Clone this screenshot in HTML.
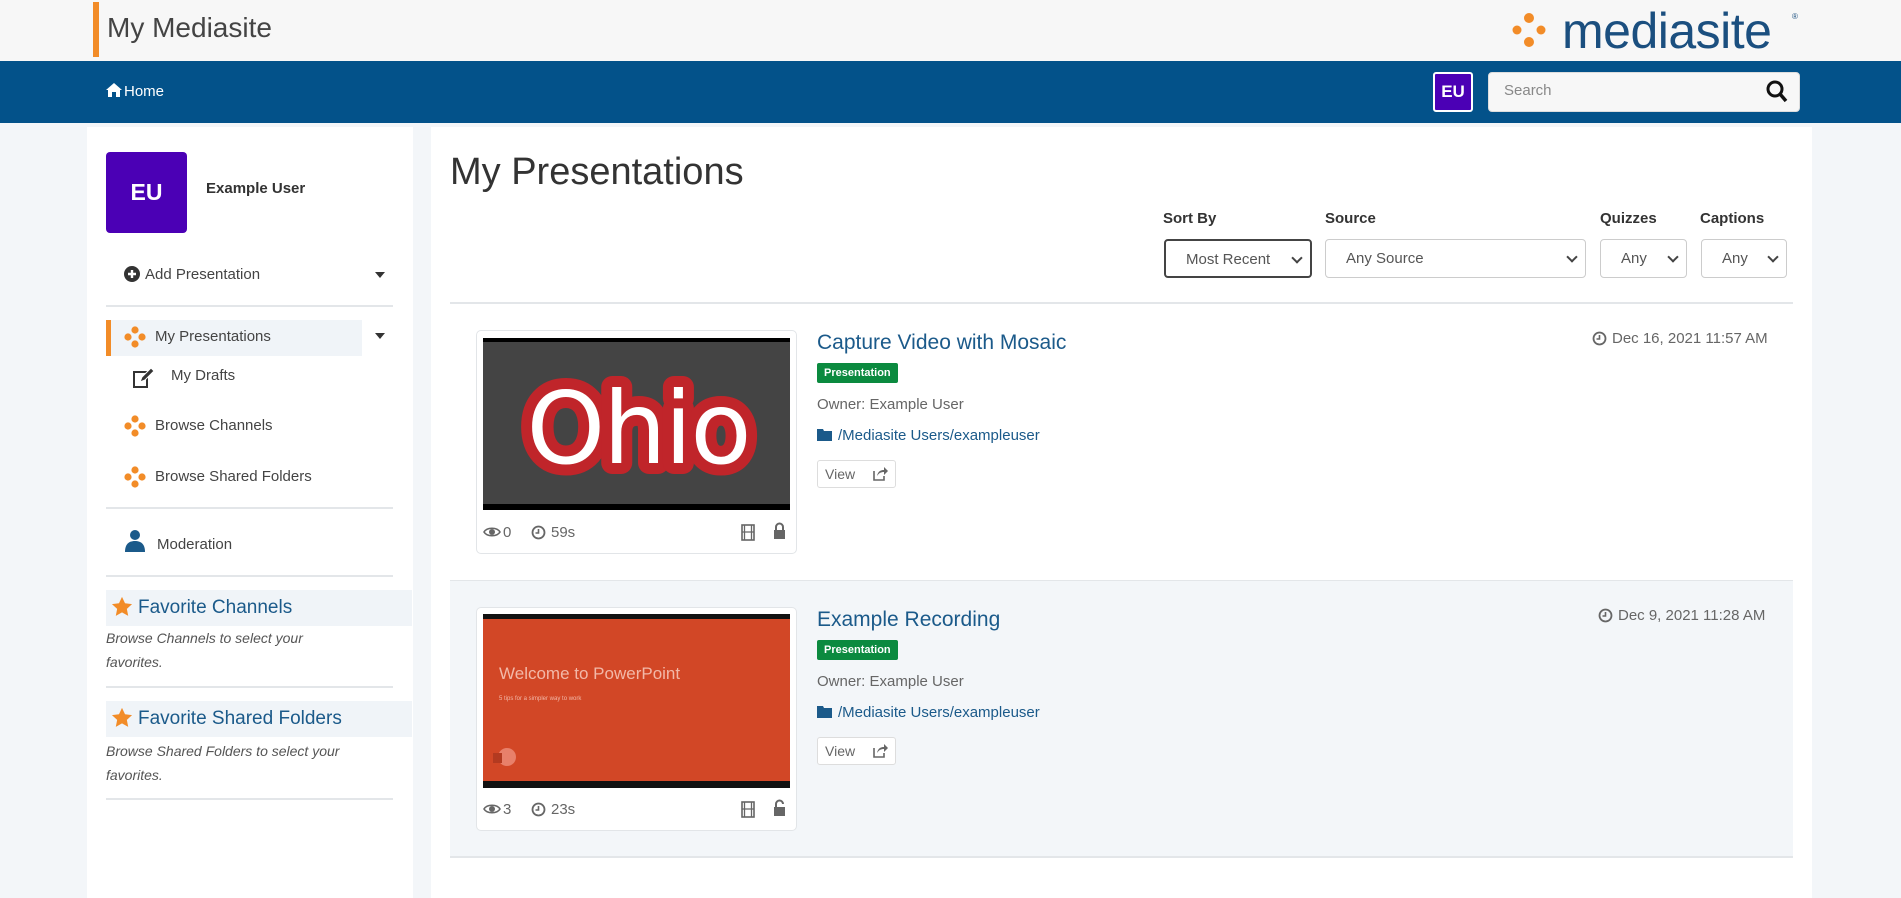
<!DOCTYPE html>
<html><head><meta charset="utf-8"><style>
*{box-sizing:border-box;margin:0;padding:0}
body{width:1901px;height:898px;overflow:hidden;background:#f3f6f9;font-family:"Liberation Sans",sans-serif;color:#555;position:relative}
.a{position:absolute}
.hdr{left:0;top:0;width:1901px;height:61px;background:#f7f7f7}
.nav{left:0;top:61px;width:1901px;height:62px;background:#03528a}
.side{left:87px;top:127px;width:326px;height:771px;background:#fff}
.main{left:431px;top:127px;width:1381px;height:771px;background:#fff}
.hr{height:2px;background:#e3e6e9}
.t{white-space:nowrap}
.dots{width:22px;height:22px}
.sel{border:1px solid #ccc;border-radius:4px;height:39px;font-size:15px;color:#555;padding:10px 0 0 20px;background:#fff}
.sel:after{content:"";position:absolute;right:9px;top:13px;width:6px;height:6px;border-right:2px solid #444;border-bottom:2px solid #444;transform:rotate(45deg)}
.lbl{font-size:15px;font-weight:bold;color:#333}
.card{background:#fff;border:1px solid #e2e5e8;border-radius:5px;width:321px;height:224px}
.title{font-size:21px;color:#1b5a8a}
.badge{background:#0b8a3f;color:#fff;font-size:11px;font-weight:bold;padding:4px 7px;border-radius:2px;height:20px}
.meta{font-size:15px;color:#666}
.view{border:1px solid #ddd;border-radius:3px;width:79px;height:28px;font-size:14px;color:#666;padding:5px 0 0 7px;background:#fff}
.fav{background:#f0f4f8;height:36px;width:306px;font-size:19px;color:#1b5a8a;padding:7px 0 0 32px}
.it{font-style:italic;font-size:14px;color:#555;line-height:24px}
</style></head><body>
<div class="a hdr"></div>
<div class="a" style="left:93px;top:2px;width:6px;height:55px;background:#f28c28"></div>
<div class="a t" style="left:107px;top:12px;font-size:28px;color:#444">My Mediasite</div>
<svg class="a" style="left:1509px;top:12px" width="40" height="36" viewBox="0 0 40 36"><circle cx="20" cy="6" r="5" fill="#f28c28"/><circle cx="8" cy="18" r="4.5" fill="#f28c28"/><circle cx="32" cy="18" r="4.5" fill="#f28c28"/><circle cx="20" cy="30" r="5" fill="#f28c28"/></svg>
<div class="a t" style="left:1562px;top:2px;font-size:50px;color:#1b4f7f;letter-spacing:-0.5px">mediasite</div>
<div class="a t" style="left:1792px;top:12px;font-size:8px;color:#1b4f7f">®</div>
<div class="a nav"></div>
<svg class="a" style="left:106px;top:82px" width="16" height="16" viewBox="0 0 16 16"><path d="M8 1L0 8h2v7h4v-5h4v5h4V8h2z" fill="#fff"/></svg>
<div class="a t" style="left:124px;top:83px;font-size:15px;color:#fff">Home</div>
<div class="a" style="left:1433px;top:72px;width:40px;height:40px;background:#4b00b5;border:2px solid #fff;border-radius:3px;color:#fff;font-weight:bold;font-size:17px;text-align:center;line-height:36px">EU</div>
<div class="a" style="left:1488px;top:72px;width:312px;height:40px;background:#f7f7f7;border-radius:4px;border:1px solid #ddd"></div>
<div class="a t" style="left:1504px;top:82px;font-size:15px;color:#888">Search</div>
<svg class="a" style="left:1766px;top:80px" width="22" height="24" viewBox="0 0 22 24"><circle cx="9" cy="9" r="7" stroke="#111" stroke-width="3" fill="none"/><path d="M14 14l6 7" stroke="#111" stroke-width="3.5"/></svg>

<div class="a side"></div>
<div class="a" style="left:106px;top:152px;width:81px;height:81px;background:#4b00b5;border-radius:4px;color:#fff;font-weight:bold;font-size:23px;text-align:center;line-height:81px">EU</div>
<div class="a t" style="left:206px;top:180px;font-size:15px;font-weight:bold;color:#333">Example User</div>
<svg class="a" style="left:124px;top:266px" width="16" height="16"><circle cx="8" cy="8" r="8" fill="#333"/><path d="M8 4v8M4 8h8" stroke="#fff" stroke-width="2.4"/></svg>
<div class="a t" style="left:145px;top:266px;font-size:15px;color:#444">Add Presentation</div>
<div class="a" style="left:375px;top:272px;border:5px solid transparent;border-top:6px solid #333"></div>
<div class="a hr" style="left:106px;top:305px;width:287px"></div>
<div class="a" style="left:106px;top:320px;width:256px;height:36px;background:#f0f4f8;border-left:5px solid #f28c28"></div>
<svg class="a dots" style="left:124px;top:326px" viewBox="0 0 22 22"><circle cx="11" cy="4" r="3.6" fill="#f28c28"/><circle cx="4" cy="11" r="3.6" fill="#f28c28"/><circle cx="18" cy="11" r="3.6" fill="#f28c28"/><circle cx="11" cy="18" r="3.6" fill="#f28c28"/></svg>
<div class="a t" style="left:155px;top:328px;font-size:15px;color:#444">My Presentations</div>
<div class="a" style="left:375px;top:333px;border:5px solid transparent;border-top:6px solid #333"></div>
<svg class="a" style="left:132px;top:367px" width="24" height="22" viewBox="0 0 24 22"><rect x="2" y="5" width="13" height="15" fill="none" stroke="#333" stroke-width="2"/><path d="M8 15l2-5 9-9 3 3-9 9z" fill="#333" stroke="#fff" stroke-width="1"/></svg>
<div class="a t" style="left:171px;top:367px;font-size:15px;color:#444">My Drafts</div>
<svg class="a dots" style="left:124px;top:415px" viewBox="0 0 22 22"><circle cx="11" cy="4" r="3.6" fill="#f28c28"/><circle cx="4" cy="11" r="3.6" fill="#f28c28"/><circle cx="18" cy="11" r="3.6" fill="#f28c28"/><circle cx="11" cy="18" r="3.6" fill="#f28c28"/></svg>
<div class="a t" style="left:155px;top:417px;font-size:15px;color:#444">Browse Channels</div>
<svg class="a dots" style="left:124px;top:466px" viewBox="0 0 22 22"><circle cx="11" cy="4" r="3.6" fill="#f28c28"/><circle cx="4" cy="11" r="3.6" fill="#f28c28"/><circle cx="18" cy="11" r="3.6" fill="#f28c28"/><circle cx="11" cy="18" r="3.6" fill="#f28c28"/></svg>
<div class="a t" style="left:155px;top:468px;font-size:15px;color:#444">Browse Shared Folders</div>
<div class="a hr" style="left:106px;top:507px;width:287px"></div>
<svg class="a" style="left:124px;top:529px" width="22" height="24" viewBox="0 0 22 24"><circle cx="11" cy="6" r="5" fill="#1b5a8a"/><path d="M1 23c0-8 4-11 10-11s10 3 10 11z" fill="#1b5a8a"/></svg>
<div class="a t" style="left:157px;top:536px;font-size:15px;color:#444">Moderation</div>
<div class="a hr" style="left:106px;top:575px;width:287px"></div>
<div class="a fav t" style="left:106px;top:590px">Favorite Channels</div>
<svg class="a" style="left:111px;top:596px" width="22" height="21" viewBox="0 0 24 23"><path d="M12 1l3.3 7 7.7.9-5.7 5.2 1.5 7.6L12 17.9 5.2 21.7l1.5-7.6L1 8.9 8.7 8z" fill="#f28c28"/></svg>
<div class="a it" style="left:106px;top:626px">Browse Channels to select your<br>favorites.</div>
<div class="a hr" style="left:106px;top:686px;width:287px"></div>
<div class="a fav t" style="left:106px;top:701px">Favorite Shared Folders</div>
<svg class="a" style="left:111px;top:707px" width="22" height="21" viewBox="0 0 24 23"><path d="M12 1l3.3 7 7.7.9-5.7 5.2 1.5 7.6L12 17.9 5.2 21.7l1.5-7.6L1 8.9 8.7 8z" fill="#f28c28"/></svg>
<div class="a it" style="left:106px;top:739px">Browse Shared Folders to select your<br>favorites.</div>
<div class="a hr" style="left:106px;top:798px;width:287px"></div>

<div class="a main"></div>
<div class="a t" style="left:450px;top:151px;font-size:38px;color:#333">My Presentations</div>
<div class="a lbl t" style="left:1163px;top:210px">Sort By</div>
<div class="a lbl t" style="left:1325px;top:210px">Source</div>
<div class="a lbl t" style="left:1600px;top:210px">Quizzes</div>
<div class="a lbl t" style="left:1700px;top:210px">Captions</div>
<div class="a sel t" style="left:1164px;top:239px;width:148px;border:2px solid #444">Most Recent</div>
<div class="a sel t" style="left:1325px;top:239px;width:261px">Any Source</div>
<div class="a sel t" style="left:1600px;top:239px;width:87px">Any</div>
<div class="a sel t" style="left:1701px;top:239px;width:86px">Any</div>
<div class="a hr" style="left:450px;top:302px;width:1343px"></div>

<div class="a card" style="left:476px;top:330px"></div>
<svg class="a" style="left:483px;top:338px" width="307" height="172" viewBox="0 0 307 172"><rect width="307" height="172" fill="#444"/><rect width="307" height="4" fill="#000"/><rect y="166" width="307" height="6" fill="#000"/>
<text x="155" y="125" text-anchor="middle" font-family="DejaVu Sans" font-size="100" fill="#fff" stroke="#c0252a" stroke-width="22" paint-order="stroke" stroke-linejoin="round" letter-spacing="-2">Ohio</text></svg>
<svg class="a" style="left:483px;top:525px" width="18" height="14" viewBox="0 0 18 14"><path d="M1 7c3-5 13-5 16 0c-3 5-13 5-16 0z" fill="none" stroke="#666" stroke-width="1.6"/><circle cx="9" cy="7" r="3" fill="#666"/></svg>
<div class="a meta t" style="left:503px;top:524px">0</div>
<svg class="a" style="left:531px;top:525px" width="15" height="15"><circle cx="7.5" cy="7.5" r="6" fill="none" stroke="#666" stroke-width="1.8"/><path d="M7.5 4v4h-3" stroke="#666" stroke-width="1.6" fill="none"/></svg>
<div class="a meta t" style="left:551px;top:524px">59s</div>
<svg class="a" style="left:741px;top:524px" width="14" height="17"><rect x="1" y="1" width="12" height="15" fill="none" stroke="#666" stroke-width="1.6"/><path d="M1 8h12M3.5 1v15M10.5 1v15" stroke="#666" stroke-width="1.3"/></svg>
<svg class="a" style="left:773px;top:522px" width="13" height="18"><path d="M3 8V5a3.5 3.5 0 0 1 7 0v3" fill="none" stroke="#666" stroke-width="2"/><rect x="1" y="8" width="11" height="9" fill="#666"/></svg>
<div class="a title t" style="left:817px;top:331px">Capture Video with Mosaic</div>
<div class="a badge t" style="left:817px;top:363px">Presentation</div>
<div class="a meta t" style="left:817px;top:396px">Owner: Example User</div>
<svg class="a" style="left:817px;top:428px" width="15" height="13"><path d="M0 1h6l1 2h8v10H0z" fill="#1b5a8a"/></svg>
<div class="a meta t" style="left:838px;top:427px;color:#1b5a8a">/Mediasite Users/exampleuser</div>
<div class="a view t" style="left:817px;top:460px">View</div>
<svg class="a" style="left:872px;top:466px" width="16" height="15"><path d="M2 5v9h10V10" fill="none" stroke="#666" stroke-width="1.6"/><path d="M5 10c1-5 4-6 7-6V1l4 4-4 4V6c-3 0-5 1-7 4z" fill="#666"/></svg>
<svg class="a" style="left:1592px;top:331px" width="15" height="15"><circle cx="7.5" cy="7.5" r="6" fill="none" stroke="#666" stroke-width="1.8"/><path d="M7.5 4v4h-3" stroke="#666" stroke-width="1.6" fill="none"/></svg>
<div class="a meta t" style="left:1612px;top:330px">Dec 16, 2021 11:57 AM</div>

<div class="a" style="left:450px;top:580px;width:1343px;height:277px;background:#f3f6f9;border-top:1px solid #e3e6e9"></div>
<div class="a card" style="left:476px;top:607px"></div>
<svg class="a" style="left:483px;top:614px" width="307" height="174" viewBox="0 0 307 174"><rect width="307" height="174" fill="#d24726"/><rect width="307" height="5" fill="#111"/><rect y="167" width="307" height="7" fill="#111"/>
<text x="16" y="65" font-family="Liberation Sans" font-size="17" fill="#f2b8a8">Welcome to PowerPoint</text>
<text x="16" y="86" font-family="Liberation Sans" font-size="6" fill="#f2b8a8">5 tips for a simpler way to work</text>
<circle cx="24" cy="143" r="9" fill="#e8806a"/><rect x="10" y="139" width="9" height="10" fill="#b33a20"/></svg>
<svg class="a" style="left:483px;top:802px" width="18" height="14" viewBox="0 0 18 14"><path d="M1 7c3-5 13-5 16 0c-3 5-13 5-16 0z" fill="none" stroke="#666" stroke-width="1.6"/><circle cx="9" cy="7" r="3" fill="#666"/></svg>
<div class="a meta t" style="left:503px;top:801px">3</div>
<svg class="a" style="left:531px;top:802px" width="15" height="15"><circle cx="7.5" cy="7.5" r="6" fill="none" stroke="#666" stroke-width="1.8"/><path d="M7.5 4v4h-3" stroke="#666" stroke-width="1.6" fill="none"/></svg>
<div class="a meta t" style="left:551px;top:801px">23s</div>
<svg class="a" style="left:741px;top:801px" width="14" height="17"><rect x="1" y="1" width="12" height="15" fill="none" stroke="#666" stroke-width="1.6"/><path d="M1 8h12M3.5 1v15M10.5 1v15" stroke="#666" stroke-width="1.3"/></svg>
<svg class="a" style="left:773px;top:799px" width="13" height="18"><path d="M3 8V5a3.5 3.5 0 0 1 7 0" fill="none" stroke="#666" stroke-width="2"/><rect x="1" y="8" width="11" height="9" fill="#666"/></svg>
<div class="a title t" style="left:817px;top:608px">Example Recording</div>
<div class="a badge t" style="left:817px;top:640px">Presentation</div>
<div class="a meta t" style="left:817px;top:673px">Owner: Example User</div>
<svg class="a" style="left:817px;top:705px" width="15" height="13"><path d="M0 1h6l1 2h8v10H0z" fill="#1b5a8a"/></svg>
<div class="a meta t" style="left:838px;top:704px;color:#1b5a8a">/Mediasite Users/exampleuser</div>
<div class="a view t" style="left:817px;top:737px">View</div>
<svg class="a" style="left:872px;top:743px" width="16" height="15"><path d="M2 5v9h10V10" fill="none" stroke="#666" stroke-width="1.6"/><path d="M5 10c1-5 4-6 7-6V1l4 4-4 4V6c-3 0-5 1-7 4z" fill="#666"/></svg>
<svg class="a" style="left:1598px;top:608px" width="15" height="15"><circle cx="7.5" cy="7.5" r="6" fill="none" stroke="#666" stroke-width="1.8"/><path d="M7.5 4v4h-3" stroke="#666" stroke-width="1.6" fill="none"/></svg>
<div class="a meta t" style="left:1618px;top:607px">Dec 9, 2021 11:28 AM</div>
<div class="a hr" style="left:450px;top:856px;width:1343px"></div>
</body></html>
